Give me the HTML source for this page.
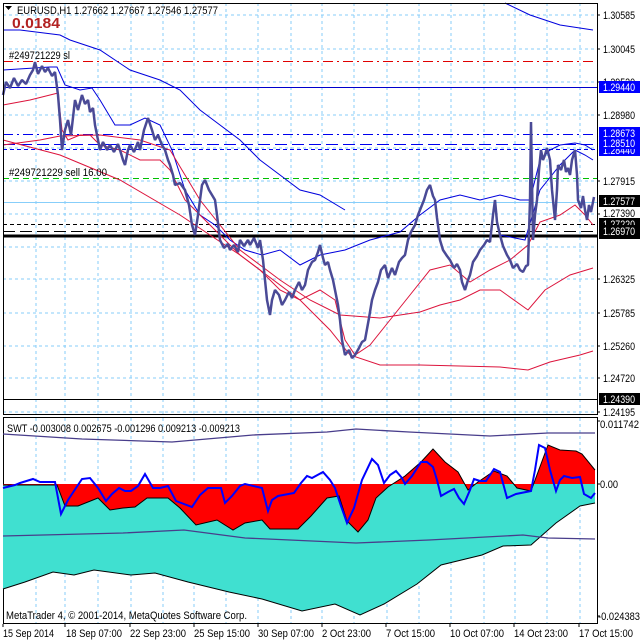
<!DOCTYPE html>
<html><head><meta charset="utf-8"><style>
html,body{margin:0;padding:0;background:#fff;}
svg{display:block;font-family:"Liberation Sans",sans-serif;}
</style></head><body>
<svg width="640" height="640" viewBox="0 0 640 640" xmlns="http://www.w3.org/2000/svg">
<rect width="640" height="640" fill="#fff"/>
<g stroke="#87cefa" stroke-width="1" stroke-dasharray="3,3" fill="none">
<path d="M3 15H597M3 49H597M3 82H597M3 115H597M3 148H597M3 181H597M3 214H597M3 247H597M3 279H597M3 313H597M3 346H597M3 378H597M3 412H597"/>
<path d="M36 3V415M65 3V415M98 3V415M131 3V415M163 3V415M194 3V415M226 3V415M258 3V415M291 3V415M322 3V415M354 3V415M387 3V415M419 3V415M451 3V415M484 3V415M515 3V415M547 3V415M580 3V415"/>
<path d="M36 418V624M65 418V624M98 418V624M131 418V624M163 418V624M194 418V624M226 418V624M258 418V624M291 418V624M322 418V624M354 418V624M387 418V624M419 418V624M451 418V624M484 418V624M515 418V624M547 418V624M580 418V624"/>
</g>
<line x1="3" y1="61.5" x2="597" y2="61.5" stroke="#e00000" stroke-dasharray="10,4,2,4"/>
<line x1="3" y1="87.5" x2="597" y2="87.5" stroke="#0000cc"/>
<line x1="3" y1="134.5" x2="597" y2="134.5" stroke="#0000ee" stroke-dasharray="10,4,2,4"/>
<line x1="3" y1="144.5" x2="597" y2="144.5" stroke="#0000ee" stroke-dasharray="12,5"/>
<line x1="3" y1="149.5" x2="597" y2="149.5" stroke="#0000ee" stroke-dasharray="4,3"/>
<line x1="3" y1="178.5" x2="597" y2="178.5" stroke="#00c000" stroke-dasharray="6,4"/>
<line x1="3" y1="202.5" x2="597" y2="202.5" stroke="#87cefa"/>
<line x1="3" y1="224.5" x2="597" y2="224.5" stroke="#000" stroke-dasharray="4,3"/>
<line x1="3" y1="231.5" x2="597" y2="231.5" stroke="#000" stroke-dasharray="12,5"/>
<line x1="3" y1="236" x2="597" y2="236" stroke="#000" stroke-width="3"/>
<line x1="3" y1="399.5" x2="597" y2="399.5" stroke="#000"/>
<g fill="none" stroke="#0000dd" stroke-width="1">
<polyline points="3,30 20,30 60,35 70,40 100,50 130,70 160,80 180,90 200,110 220,125 240,140 260,160 280,175 300,190 320,195 345,210"/>
<polyline points="505,3 530,15 560,25 593,30"/>
<polyline points="3,70 50,67 57,67 65,85 80,90 92,88 100,100 115,125 130,125 145,118 160,125 172,150 185,190 200,215 215,225 230,240 245,250 262,255 280,250 300,265 320,255 345,250 370,240 400,232 420,215 440,200 460,195 480,200 500,195 520,200 530,200"/>
<polyline points="500,235 525,240 540,190 560,165 575,150 585,155 593,160"/>
<polyline points="530,200 540,160 550,150 560,145 575,143 585,145 593,150"/>
</g>
<g fill="none" stroke="#dc143c" stroke-width="1">
<polyline points="3,105 30,100 50,95 58,93 62,130 68,140 80,135 90,135 100,145 120,150 140,160 160,160 170,170 185,200 200,215 220,235 240,255 260,270 280,290 300,300 320,290 335,300 345,340 355,355 370,345 390,320 410,295 430,270 450,265 470,282 490,270 510,260 528,245 540,222 560,215 575,205 585,215 593,225"/>
<polyline points="3,140 60,155 120,180 180,215 240,255 300,300 330,330 350,355 380,365 420,365 460,366 500,367 528,370 550,362 580,355 593,351"/>
<polyline points="3,145 40,140 60,136 100,135 140,140 170,150 200,200 240,250 280,280 310,300 340,315 380,318 420,312 440,305 460,300 480,290 500,290 528,310 545,290 570,275 593,268"/>
</g>
<polyline fill="none" stroke="#4a4a96" stroke-width="2.5" stroke-linejoin="bevel" points="3,95 6,82 10,88 14,78 18,86 22,80 26,84 30,75 33,70 35,62 38,74 42,66 45,72 48,68 52,76 55,72 58,95 60,120 62,150 65,130 68,120 71,135 75,100 78,110 82,95 85,104 88,100 90,112 93,108 95,125 98,140 100,150 103,142 107,150 110,145 114,152 118,144 120,150 123,160 125,165 128,150 130,145 134,152 138,142 140,150 144,130 148,118 152,130 155,140 158,135 162,145 165,150 168,160 170,165 173,175 175,185 180,183 185,190 189,205 192,225 195,235 198,215 202,185 205,180 209,190 212,195 215,200 217,215 220,240 224,248 228,244 230,250 234,245 238,252 240,240 244,246 248,240 250,245 254,238 258,248 260,240 263,260 265,280 267,300 270,315 272,300 275,290 279,295 282,305 285,300 289,292 292,298 295,290 299,282 302,290 305,285 308,270 312,262 315,260 318,252 320,245 323,258 325,265 328,262 330,270 333,280 335,290 338,305 340,320 342,340 345,355 349,350 352,358 355,355 359,348 362,342 365,340 369,318 372,300 375,290 378,282 381,270 385,265 388,278 392,268 395,275 399,262 402,258 405,255 408,240 411,232 415,225 418,215 420,210 424,200 427,190 430,185 433,196 435,200 437,218 440,240 443,250 447,256 450,260 454,268 457,264 460,270 462,282 465,290 468,280 470,275 473,262 477,256 480,250 484,245 487,240 490,242 493,215 495,200 497,222 500,235 503,246 507,255 510,260 513,268 517,264 520,270 523,272 526,266 528,265 530,200 531,122 533,240 535,215 537,200 539,170 541,150 543,160 545,155 547,148 550,160 552,190 555,220 557,190 558,165 561,170 564,160 566,172 568,168 570,175 572,160 575,150 577,175 578,200 581,208 583,196 585,210 587,220 589,205 591,212 594,197"/>
<rect x="3.5" y="3.5" width="594" height="411" fill="none" stroke="#000"/>
<rect x="3.5" y="417.5" width="594" height="206" fill="none" stroke="#000"/>
<polygon fill="#40e0d0" points="3,484 595,484 595,503 580,506 556,523 531,545 503,546 482,555 441,565 417,584 384,604 360,615 335,604 302,611 262,599 229,592 188,582 155,573 131,575 94,570 74,575 53,572 25,582 3,589"/>
<polyline fill="none" stroke="#000" points="3,589 25,582 53,572 74,575 94,570 131,575 155,573 188,582 229,592 262,599 302,611 335,604 360,615 384,604 417,584 441,565 482,555 503,546 531,545 556,523 580,506 595,503"/>
<polygon fill="#ff0000" points="3,484 3,485 57,485 65,506 78,506 98,498 110,510 123,508 135,507 147,498 168,498 180,508 196,525 217,520 233,530 245,523 262,520 270,529 298,529 311,516 327,498 339,496 347,521 358,532 368,520 376,498 388,487 405,476 421,462 433,449 445,462 458,472 468,490 478,482 494,471 507,476 517,488 531,491 548,445 560,450 576,451 582,454 595,470 595,484"/>
<polyline fill="none" stroke="#000" points="3,485 57,485 65,506 78,506 98,498 110,510 123,508 135,507 147,498 168,498 180,508 196,525 217,520 233,530 245,523 262,520 270,529 298,529 311,516 327,498 339,496 347,521 358,532 368,520 376,498 388,487 405,476 421,462 433,449 445,462 458,472 468,490 478,482 494,471 507,476 517,488 531,491 548,445 560,450 576,451 582,454 595,470"/>
<g fill="none" stroke="#483d8b" stroke-width="1.3">
<polyline points="3,434 82,439 172,442 253,435 327,432 356,429 409,432 490,436 548,433 595,433"/>
<polyline points="3,536 123,533 184,530 245,538 356,543 429,540 523,535 548,538 595,539"/>
</g>
<polyline fill="none" stroke="#0000ff" stroke-width="2" points="3,488 15,485 20,483 33,479 40,482 55,482 61,514 68,500 72,494 82,479 90,478 98,488 106,501 112,494 119,488 125,491 131,491 138,486 145,474 153,488 160,488 168,486 176,501 184,504 192,507 200,495 208,488 214,488 221,488 225,503 232,496 240,486 245,484 262,488 268,511 272,500 278,496 294,493 301,483 307,476 312,478 323,472 330,480 335,488 341,506 347,523 354,508 362,480 372,459 378,465 384,483 390,475 396,471 402,478 405,484 412,476 421,462 427,462 433,467 437,480 441,496 448,492 454,489 459,498 464,504 470,490 474,479 480,481 486,481 494,469 500,472 507,498 516,494 531,491 535,470 539,445 545,448 550,470 556,491 560,480 564,476 572,478 580,477 584,494 591,498 595,493"/>
<g font-size="11" fill="#000" lengthAdjust="spacingAndGlyphs">
<path d="M5 6h7l-3.5 4z" fill="#000"/>
<text x="17" y="14" textLength="201" lengthAdjust="spacingAndGlyphs">EURUSD,H1  1.27662 1.27667 1.27546 1.27577</text>
<text x="9" y="59" textLength="61" lengthAdjust="spacingAndGlyphs">#249721229 sl</text>
<text x="9" y="176" textLength="98" lengthAdjust="spacingAndGlyphs">#249721229 sell 16.00</text>
<text x="7" y="432" textLength="233" lengthAdjust="spacingAndGlyphs">SWT -0.003008 0.002675 -0.001296 0.009213 -0.009213</text>
<text x="6" y="619" textLength="241" lengthAdjust="spacingAndGlyphs">MetaTrader 4, © 2001-2014, MetaQuotes Software Corp.</text>
</g>
<text x="12" y="28" font-size="15" font-weight="bold" fill="#b22222" textLength="48" lengthAdjust="spacingAndGlyphs">0.0184</text>
<g font-size="11" fill="#000">
<text x="603" y="19" textLength="32" lengthAdjust="spacingAndGlyphs">1.30585</text>
<text x="603" y="53" textLength="32" lengthAdjust="spacingAndGlyphs">1.30045</text>
<text x="603" y="86" textLength="32" lengthAdjust="spacingAndGlyphs">1.29520</text>
<text x="603" y="119" textLength="32" lengthAdjust="spacingAndGlyphs">1.28980</text>
<text x="603" y="185" textLength="32" lengthAdjust="spacingAndGlyphs">1.27915</text>
<text x="603" y="217" textLength="32" lengthAdjust="spacingAndGlyphs">1.27390</text>
<text x="603" y="283" textLength="32" lengthAdjust="spacingAndGlyphs">1.26325</text>
<text x="603" y="317" textLength="32" lengthAdjust="spacingAndGlyphs">1.25785</text>
<text x="603" y="350" textLength="32" lengthAdjust="spacingAndGlyphs">1.25260</text>
<text x="603" y="382" textLength="32" lengthAdjust="spacingAndGlyphs">1.24720</text>
<text x="603" y="416" textLength="32" lengthAdjust="spacingAndGlyphs">1.24195</text>
<text x="600" y="428" textLength="39" lengthAdjust="spacingAndGlyphs">0.011742</text>
<text x="600" y="488" textLength="18" lengthAdjust="spacingAndGlyphs">0.00</text>
<text x="598" y="620" textLength="42" lengthAdjust="spacingAndGlyphs">-0.024383</text>
</g>
<g stroke="#000"><path d="M597 15h3M597 49h3M597 82h3M597 115h3M597 181h3M597 214h3M597 279h3M597 313h3M597 346h3M597 378h3M597 412h3M597 421h3M597 484h3M597 616h3"/></g>
<g font-size="11" fill="#fff">
<rect x="599" y="144" width="41" height="12" fill="#0000ff"/>
<text x="603" y="154" textLength="32" lengthAdjust="spacingAndGlyphs">1.28440</text>
<rect x="599" y="81" width="41" height="12" fill="#0000ff"/>
<text x="603" y="91" textLength="32" lengthAdjust="spacingAndGlyphs">1.29440</text>
<rect x="599" y="127" width="41" height="12" fill="#0000ff"/>
<text x="603" y="137" textLength="32" lengthAdjust="spacingAndGlyphs">1.28673</text>
<rect x="599" y="137" width="41" height="12" fill="#0000ff"/>
<text x="603" y="147" textLength="32" lengthAdjust="spacingAndGlyphs">1.28510</text>
<rect x="599" y="195" width="41" height="12" fill="#000"/>
<text x="603" y="205" textLength="32" lengthAdjust="spacingAndGlyphs">1.27577</text>
<rect x="599" y="218" width="41" height="12" fill="#000"/>
<text x="603" y="228" textLength="32" lengthAdjust="spacingAndGlyphs">1.27220</text>
<rect x="599" y="231" width="41" height="8" fill="#000"/>
<rect x="599" y="225" width="41" height="12" fill="#000"/>
<text x="603" y="235" textLength="32" lengthAdjust="spacingAndGlyphs">1.26970</text>
<rect x="599" y="393" width="41" height="12" fill="#000"/>
<text x="603" y="403" textLength="32" lengthAdjust="spacingAndGlyphs">1.24390</text>
</g>
<g stroke="#000"><path d="M3 624v3M65 624v3M130 624v3M194 624v3M258 624v3M322 624v3M386 624v3M450 624v3M514 624v3M579 624v3"/></g>
<g font-size="11" fill="#000">
<text x="3" y="637" textLength="51" lengthAdjust="spacingAndGlyphs">15 Sep 2014</text>
<text x="66" y="637" textLength="56" lengthAdjust="spacingAndGlyphs">18 Sep 07:00</text>
<text x="130" y="637" textLength="56" lengthAdjust="spacingAndGlyphs">22 Sep 23:00</text>
<text x="194" y="637" textLength="56" lengthAdjust="spacingAndGlyphs">25 Sep 15:00</text>
<text x="258" y="637" textLength="56" lengthAdjust="spacingAndGlyphs">30 Sep 07:00</text>
<text x="322" y="637" textLength="49" lengthAdjust="spacingAndGlyphs">2 Oct 23:00</text>
<text x="386" y="637" textLength="49" lengthAdjust="spacingAndGlyphs">7 Oct 15:00</text>
<text x="450" y="637" textLength="54" lengthAdjust="spacingAndGlyphs">10 Oct 07:00</text>
<text x="514" y="637" textLength="54" lengthAdjust="spacingAndGlyphs">14 Oct 23:00</text>
<text x="579" y="637" textLength="54" lengthAdjust="spacingAndGlyphs">17 Oct 15:00</text>
</g>
</svg>
</body></html>
